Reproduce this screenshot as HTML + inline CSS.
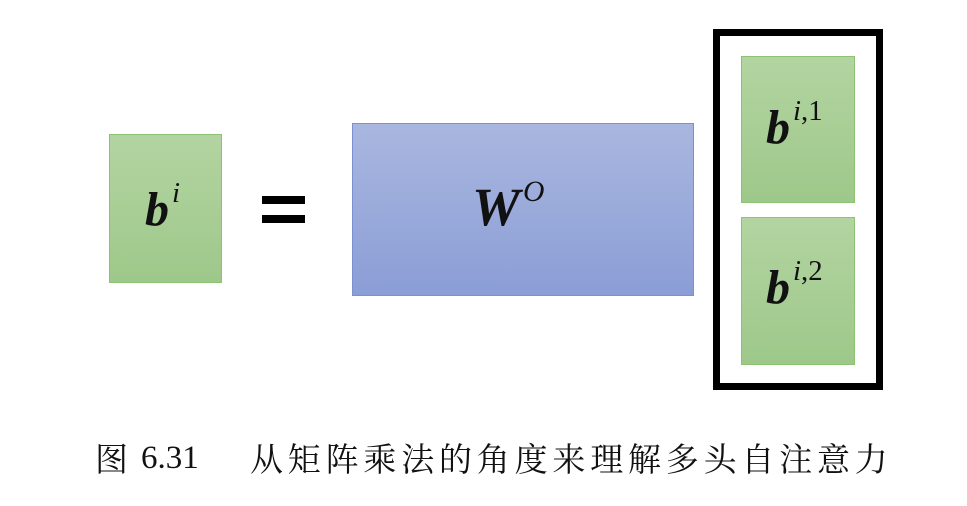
<!DOCTYPE html>
<html><head><meta charset="utf-8"><style>
body{margin:0;width:967px;height:506px;background:#fff;position:relative;overflow:hidden;font-family:"Liberation Serif","Noto Serif CJK SC",serif}
.g{position:absolute;background:linear-gradient(#b3d4a1,#9ec88a);border:1px solid #8cc273;box-sizing:border-box}
.b{position:absolute;background:linear-gradient(#a9b7df,#8b9dd6);border:1px solid #7b91cf;box-sizing:border-box}
.t{position:absolute;font-weight:bold;font-style:italic;color:#111;white-space:nowrap}
sup{font-weight:normal;font-style:normal;font-size:60%;vertical-align:0;position:relative;top:-0.8em;margin-left:3px}
.c{position:absolute;top:439px;font-size:33px;line-height:44px;color:#111;white-space:nowrap}
</style></head><body>
<div class="g" style="left:109px;top:134px;width:113px;height:149px"></div>
<div class="t" style="left:145px;top:182px;font-size:48px">b<sup><i>i</i></sup></div>
<div style="position:absolute;left:262px;top:196px;width:43px;height:8px;background:#000"></div>
<div style="position:absolute;left:262px;top:215px;width:43px;height:8px;background:#000"></div>
<div class="b" style="left:352px;top:123px;width:342px;height:173px"></div>
<div class="t" style="left:472px;top:176px;font-size:54px">W<sup style="font-style:italic;font-size:55%">O</sup></div>
<div style="position:absolute;left:713px;top:29px;width:170px;height:361px;border:7px solid #000;box-sizing:border-box"></div>
<div class="g" style="left:741px;top:56px;width:114px;height:147px"></div>
<div class="t" style="left:766px;top:100px;font-size:48px">b<sup><i>i</i>,1</sup></div>
<div class="g" style="left:741px;top:217px;width:114px;height:148px"></div>
<div class="t" style="left:766px;top:260px;font-size:48px">b<sup><i>i</i>,2</sup></div>
<div class="c" style="left:95px">图</div>
<div class="c" style="left:141px;top:436px">6.31</div>
<div class="c" style="left:250px;letter-spacing:4.8px">从矩阵乘法的角度来理解多头自注意力</div>
</body></html>
